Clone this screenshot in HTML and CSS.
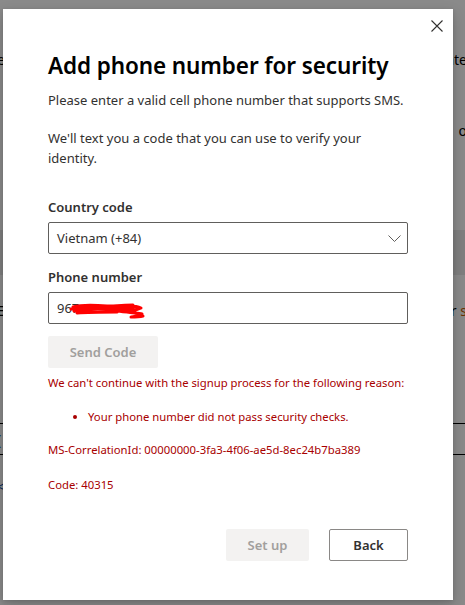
FILE: index.html
```html
<!DOCTYPE html>
<html lang="en">
<head>
<meta charset="utf-8">
<title>Add phone number for security</title>
<link rel="stylesheet" href="styles.css">
</head>
<body>
<div class="page">
  <div class="bg-row r1"><span class="frag-l">e</span><span class="frag-r">ate</span></div>
  <div class="bg-row r2"><span class="frag-l"></span><span class="frag-r">o</span></div>
  <div class="bg-band"></div>
  <div class="bg-row r3"><span class="frag-l">E</span><span class="frag-r">r <b class="orange">s</b></span></div>
  <div class="bg-box"><span class="frag-l blue">(</span></div>
  <div class="bg-row r4"><span class="frag-l blue">&lt;</span></div>
</div>
<div class="overlay"></div>

<div class="modal" role="dialog" aria-labelledby="dlg-title">
  <div class="modal-top">
    <button class="close" aria-label="Close">
      <svg width="12" height="12" viewBox="0 0 12 12"><path d="M0.5 0.5 L11.5 11.5 M11.5 0.5 L0.5 11.5" stroke="#323130" stroke-width="1.1" fill="none"/></svg>
    </button>
  </div>
  <div class="content">
    <h1 id="dlg-title" class="title">Add phone number for security</h1>
    <p class="text t1">Please enter a valid cell phone number that supports SMS.</p>
    <p class="text t2">We'll text you a code that you can use to verify your identity.</p>

    <label class="label l1">Country code</label>
    <div class="select">
      <span>Vietnam (+84)</span>
      <svg width="13" height="7" viewBox="0 0 13 7"><path d="M0.5 0.5 L6.5 6.5 L12.5 0.5" stroke="#605e5c" stroke-width="1" fill="none"/></svg>
    </div>

    <label class="label l2">Phone number</label>
    <div class="input">
      <span>967</span>
      <svg class="scribble" width="76" height="18" viewBox="0 0 76 18">
        <path d="M4 5 C14 2 26 3 38 4 C48 4 56 3 64 3 M2 7 C14 5 28 5 42 6 C52 6 60 6 66 5 M5 9 C18 7 32 7 46 8 C54 8 60 8 64 8 M8 11 C20 10 34 10 48 10 M40 6 C50 10 58 11 66 9 M60 4 C66 4 70 5 72 6 C68 8 62 9 58 10 C64 11 70 11 73 12 C68 14 64 15 62 15 C66 15 70 15 74 14" stroke="#ff0000" stroke-width="3" fill="none" stroke-linecap="round" stroke-linejoin="round"/>
      </svg>
    </div>

    <button class="btn disabled send" disabled>Send Code</button>

    <div class="errors">
      <p class="err e1">We can't continue with the signup process for the following reason:</p>
      <ul class="err-list"><li>Your phone number did not pass security checks.</li></ul>
      <p class="err e2">MS-CorrelationId: 00000000-3fa3-4f06-ae5d-8ec24b7ba389</p>
      <p class="err e3">Code: 40315</p>
    </div>
  </div>
  <div class="footer">
    <button class="btn disabled setup" disabled>Set up</button>
    <button class="btn back">Back</button>
  </div>
</div>
</body>
</html>
```
FILE: styles.css
```css
* { box-sizing: border-box; }
html, body { margin: 0; padding: 0; }
body {
  width: 465px;
  height: 605px;
  overflow: hidden;
  position: relative;
  font-family: "Noto Sans", "Open Sans", sans-serif;
  background: #fff;
  color: #000;
}

/* backdrop page (mostly hidden) */
.page {
  display: flex;
  flex-direction: column;
  width: 465px;
  height: 605px;
  font-size: 14px;
}
.bg-row { display: flex; justify-content: space-between; height: 20px; line-height: 20px; }
.r1 { margin-top: 50px; }
.r2 { margin-top: 51px; }
.bg-band { margin-top: 89px; height: 45px; background: #ebebeb; flex-shrink: 0; }
.r3 { margin-top: 26px; }
.bg-box { margin-top: 102px; height: 32px; border-top: 1px solid #000; border-bottom: 1px solid #000; display: flex; align-items: center; flex-shrink: 0; }
.r4 { margin-top: 22px; }
.frag-l { margin-left: -3px; }
.frag-r { margin-right: -2px; }
.blue { color: #0f4b9e; }
.orange { color: #c85a00; font-weight: normal; }

.overlay {
  position: absolute;
  inset: 0;
  background: rgba(0, 0, 0, 0.46);
}

/* dialog */
.modal {
  position: absolute;
  left: 3px;
  top: 9px;
  width: 450px;
  height: 591px;
  background: #fff;
  box-shadow: 0 6px 14px rgba(0,0,0,0.18), 0 1px 4px rgba(0,0,0,0.12);
  display: flex;
  flex-direction: column;
  color: #323130;
}
.modal-top {
  display: flex;
  justify-content: flex-end;
  height: 41px;
  padding: 11px 10px 0 0;
}
.close {
  width: 12px;
  height: 12px;
  padding: 0;
  border: 0;
  background: none;
  display: flex;
}
.content {
  padding: 0 45px;
  display: flex;
  flex-direction: column;
}
.title {
  margin: 0;
  font-size: 22.5px;
  font-weight: 600;
  line-height: 32px;
  color: #000;
  letter-spacing: -0.1px;
}
.text {
  margin: 8px 0 0;
  font-size: 13px;
  line-height: 20px;
  color: #323130;
}
.t2 { margin-top: 18px; }
.label {
  display: block;
  font-size: 13px;
  font-weight: 600;
  line-height: 20px;
  margin-top: 29px;
  margin-bottom: 5px;
}
.l2 { margin-top: 13px; }
.select, .input {
  height: 32px;
  border: 1px solid #605e5c;
  border-radius: 2px;
  display: flex;
  align-items: center;
  padding: 0 8px;
  font-size: 13px;
  color: #323130;
  position: relative;
}
.select { justify-content: space-between; padding-right: 6px; }
.select svg { margin-top: 1px; }
.scribble { position: absolute; left: 20px; top: 9px; }

.btn {
  font-family: inherit;
  font-size: 13px;
  font-weight: 600;
  height: 32px;
  border-radius: 2px;
  border: 1px solid transparent;
  padding: 0;
}
.disabled { background: #f3f2f1; color: #a19f9d; }
.send { width: 110px; margin-top: 12px; }

.errors { color: #a80000; font-size: 11.3px; line-height: 16px; }
.err { margin: 0; }
.e1 { margin-top: 7px; }
.err-list { margin: 18px 0 0; padding-left: 40px; }
.err-list li { padding-left: 0; }
.e2 { margin-top: 17px; }
.e3 { margin-top: 19px; }

.footer {
  margin-top: auto;
  display: flex;
  justify-content: flex-end;
  gap: 20px;
  padding: 0 45px 39px;
}
.setup { width: 83px; }
.back { width: 79px; background: #fff; border-color: #8a8886; color: #323130; }
```
